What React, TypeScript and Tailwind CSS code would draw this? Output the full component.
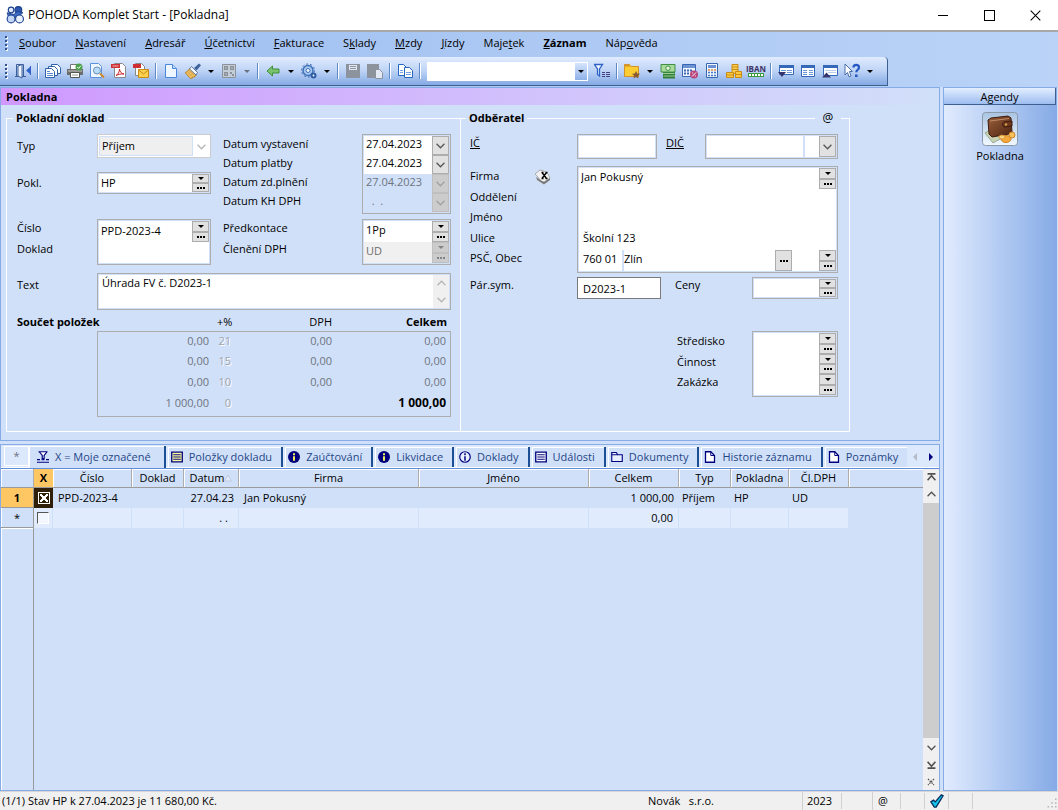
import { useState } from "react";
import type { ReactNode } from "react";
import clsx from "clsx";

const Svg = ({ children, className = "w-4 h-4" }: { children: ReactNode; className?: string }) => (
  <svg viewBox="0 0 16 16" className={clsx("shrink-0", className)} aria-hidden="true">
    {children}
  </svg>
);

const icons: Record<string, ReactNode> = {
  exit: (
    <Svg>
      <path d="M1.500 13.500V1.500h7v12M0 13.500h11" fill="none" stroke="#3b5f9c" />
      <path d="M3 3l4-1.500V15l-4-2z" fill="#eef5ff" stroke="#3b5f9c" />
      <path d="M15 4v7l-4-3.500z" fill="#2f62c8" />
      <path d="M15.500 3v9" stroke="#2f62c8" />
    </Svg>
  ),
  records: (
    <Svg>
      <path d="M6.500 1.500h6l3 3v6h-9z" fill="#fff" stroke="#2f62a8" />
      <path d="M3.500 3.500h6l3 3v6h-9z" fill="#fff" stroke="#2f62a8" />
      <path d="M.5 5.500h6l3 3v6h-9z" fill="#fff" stroke="#2f62a8" />
      <path d="M2 8.500h3M2 10.500h6M2 12.500h6" stroke="#5a8ad0" />
    </Svg>
  ),
  print: (
    <Svg>
      <path d="M3.500 6V1.500h8V6" fill="#fff" stroke="#777" />
      <path d="M0 6h16v6H0z" fill="#6d6d6d" />
      <path d="M1 7h14v2H1z" fill="#9a9a9a" />
      <path d="M3.500 9.500h9v5h-9z" fill="#fff" stroke="#555" />
      <path d="M5 12h6" stroke="#999" />
      <circle cx="12" cy="4" r="3.500" fill="#4ba24b" />
      <path d="M10.300 4l1.300 1.400 2.200-2.600" fill="none" stroke="#fff" />
    </Svg>
  ),
  preview: (
    <Svg>
      <path d="M1.500.5h8l3 3v11h-11z" fill="#eef6ff" stroke="#5b92dc" />
      <circle cx="8" cy="7.500" r="3.500" fill="#b9dcfa" stroke="#6d8fb5" />
      <path d="M11 10.500l4 4" stroke="#d08a28" strokeWidth="2" />
    </Svg>
  ),
  pdf: (
    <Svg>
      <path d="M3.500.5h8l3 3v11h-11z" fill="#fff" stroke="#888" />
      <path d="M0 1h9v4H0z" fill="#cf2f33" />
      <path d="M1.500 3h6" stroke="#f3b9ba" />
      <path d="M5 12.500c2-1 3.500-3.500 3.500-6.500.3 3 2 4.700 4.500 5-3-.3-6 .5-8 1.500z" fill="none" stroke="#c9252a" />
    </Svg>
  ),
  mail: (
    <Svg>
      <path d="M2.500.5h6l3 3v9h-9z" fill="#fff" stroke="#888" />
      <path d="M0 1h8v4H0z" fill="#cf2f33" />
      <path d="M5.500 6.500h10v8h-10z" fill="#fbd04e" stroke="#c98a16" />
      <path d="M5.500 7l5 4 5-4" fill="none" stroke="#c98a16" />
    </Svg>
  ),
  blank: (
    <Svg>
      <path d="M2.500 1.500h7l4 4v9h-11z" fill="#eef6ff" stroke="#4a86dd" />
      <path d="M9.500 1.500v4h4" fill="#bcd7f8" stroke="#4a86dd" />
    </Svg>
  ),
  brush: (
    <Svg>
      <path d="M4.500 5.500l7 6.500c-2 2-4 3-6 3.500L0 9.500c2-.5 3.500-2 4.500-4z" fill="#f0c065" stroke="#b98227" />
      <path d="M2.500 9l5.500 5M4 7.500l5.500 5" stroke="#c58f35" strokeWidth=".7" />
      <path d="M6.500 3.500l6 6-1.500 2.500-6.500-6z" fill="#f3f6fb" stroke="#3c5f93" strokeWidth=".8" />
      <path d="M9 5l5-4.500 2 1.800L11.500 7.500z" fill="#3f639b" />
    </Svg>
  ),
  qr: (
    <Svg>
      <path d="M1.500 1.500h13v13h-13z" fill="#c3ccd9" stroke="#8d9299" />
      <path d="M3 3h4v4H3zM9 3h4v4H9zM3 9h4v4H3zM9 9h2v2H9zM11 11h2v2h-2z" fill="#8d9299" />
      <path d="M4.500 4.500h1v1h-1zM10.500 4.500h1v1h-1zM4.500 10.500h1v1h-1z" fill="#e7edf6" />
    </Svg>
  ),
  back: (
    <Svg>
      <path d="M2 8l5.500-5v3H14v4H7.500v3z" fill="#7cc26c" stroke="#3c8f3c" />
    </Svg>
  ),
  gear: (
    <Svg>
      <circle cx="7" cy="7.500" r="5" fill="#a9c9f2" stroke="#3f70b5" strokeWidth="1.500" />
      <circle cx="7" cy="7.500" r="6.500" fill="none" stroke="#3f70b5" strokeDasharray="2 2" />
      <circle cx="7" cy="7.500" r="2" fill="#eff6ff" stroke="#3f70b5" />
      <circle cx="12.500" cy="12.500" r="3" fill="#2e5da6" />
      <circle cx="12.500" cy="12.500" r=".9" fill="#fff" />
    </Svg>
  ),
  save: (
    <Svg>
      <path d="M1 1h14v14H1z" fill="#8d939c" />
      <path d="M4 2h8v5H4z" fill="#e3eaf5" />
      <path d="M5 3.500h6M5 5.500h6" stroke="#8d939c" />
    </Svg>
  ),
  pasteNew: (
    <Svg>
      <path d="M0 1h12v14H0z" fill="#8d939c" />
      <path d="M8.500 6.500h4l3 3v6h-7z" fill="#e3eaf5" stroke="#8d939c" />
    </Svg>
  ),
  copy: (
    <Svg>
      <path d="M1.500 1.500h5l3 3v8h-8z" fill="#fff" stroke="#2566c0" />
      <path d="M7.500 4.500h5l3 3v7h-8z" fill="#fff" stroke="#2566c0" />
      <path d="M9 9.500h5M9 11.500h5" stroke="#76a3e4" />
      <path d="M3 7.500h3M3 9.500h3" stroke="#76a3e4" />
    </Svg>
  ),
  filter: (
    <Svg>
      <path d="M.5 1.500h8L5.500 6v7l-2-1.500V6z" fill="#f4f9ff" stroke="#2e62c4" strokeWidth="1.300" />
      <path d="M8 9.500h3M12 9.500h4M8 11.500h3M12 11.500h4M8 13.500h3M12 13.500h4" stroke="#41417f" />
    </Svg>
  ),
  folder: (
    <Svg>
      <path d="M.5 13.500v-12h5l1.500 2h7.500v10z" fill="#fccd33" stroke="#d2912a" />
      <path d="M1 2h4l1 1.500H1z" fill="#d2912a" />
      <path d="M12 8l1.200 2.500 2.800.3-2 1.900.5 2.800-2.500-1.400L9.500 15.500l.5-2.800-2-1.900 2.800-.3z" fill="#8a5a35" />
    </Svg>
  ),
  money: (
    <Svg>
      <path d="M3 9h12v6.500H3z" fill="#2f7d38" />
      <path d="M2.500 10.500h12M3.500 13h12" stroke="#b9dfae" strokeWidth=".8" />
      <path d="M1 1.500h14v7.500H1z" fill="#a9d99b" stroke="#3d8f45" />
      <circle cx="8" cy="5.200" r="2.200" fill="#e6f6e0" stroke="#3d8f45" />
    </Svg>
  ),
  calcPercent: (
    <Svg>
      <path d="M.5 1.500h13v12H.5z" fill="#f1f7ff" stroke="#3a65b0" />
      <path d="M1 2h12v3H1z" fill="#6c94d4" />
      <path d="M2 7.500h2M5 7.500h2M8 7.500h2M2 10.500h2M5 10.500h2" stroke="#3a65b0" strokeWidth="2" />
      <circle cx="12" cy="11.500" r="4" fill="#b8447c" />
      <path d="M10 13.500l4-4M10.200 10h1M12.800 13h1" stroke="#fff" />
    </Svg>
  ),
  calc: (
    <Svg>
      <path d="M2.500.5h11v14h-11z" fill="#eef5ff" stroke="#3a65b0" />
      <path d="M4 2h8v3H4z" fill="#6c94d4" />
      <path d="M4 9.500h2M7 9.500h2M10 9.500h2M4 12.500h2M7 12.500h2M10 12.500h2" stroke="#4978c4" strokeWidth="1.500" />
      <path d="M4 7h2M7 7h2M10 7h2" stroke="#e08b3c" strokeWidth="1.500" />
    </Svg>
  ),
  coins: (
    <Svg>
      <path d="M6 1.500h6v9H6z" fill="#fbd04e" stroke="#c98a16" />
      <path d="M6 4h6M6 6.500h6" stroke="#c98a16" />
      <path d="M.5 9.500h7v5h-7zM9.500 8.500h6v6h-6z" fill="#fbc93c" stroke="#c98a16" />
      <path d="M.5 12h7M9.500 11.500h6" stroke="#c98a16" />
    </Svg>
  ),
  winDown: (
    <Svg>
      <path d="M1.500 2.500h14v9h-14z" fill="#fff" stroke="#3568b8" />
      <path d="M1 2h15v3H1z" fill="#3568b8" />
      <path d="M3 7.500h5M9 7.500h5M9 9.500h5" stroke="#6b98dc" />
      <path d="M0 9h8l-4 5z" fill="#35356d" />
    </Svg>
  ),
  winFull: (
    <Svg>
      <path d="M1.500 2.500h13v11h-13z" fill="#fff" stroke="#3568b8" />
      <path d="M1 2h14v3H1z" fill="#3568b8" />
      <path d="M3 7.500h4M9 7.500h4M3 9.500h4M9 9.500h4M3 11.500h4M9 11.500h4" stroke="#6b98dc" />
    </Svg>
  ),
  winUp: (
    <Svg>
      <path d="M1.500 2.500h14v10h-14z" fill="#fff" stroke="#3568b8" />
      <path d="M1 2h15v3H1z" fill="#3568b8" />
      <path d="M3 7.500h11M6 9.500h8" stroke="#b7cdec" />
      <path d="M0 14.500h9L4.500 9.500z" fill="#35356d" />
    </Svg>
  ),
  help: (
    <Svg>
      <path d="M1 1l7.500 7.500H5.500L7 13l-2 .8-1.500-4.300L1 12z" fill="#fff" stroke="#4a6ea8" />
      <path d="M9.500 4.500c0-3.500 5.500-3.500 5.500 0 0 2.300-2.700 2.300-2.700 4.700" fill="none" stroke="#2458c4" strokeWidth="2.200" />
      <path d="M11 11.500h2.600V14H11z" fill="#2458c4" />
    </Svg>
  ),
};

const navy = "#00007f";
const tabIcons: Record<string, ReactNode> = {
  funnel: (
    <Svg className="w-3 h-3">
      <path d="M2 1h12M3 1l4 5v4h2.500V6l4-5" fill="#fff" stroke={navy} strokeWidth="1.600" />
      <path d="M0 11.500h4M6 11.500h4M12 11.500h4M0 15h16" stroke={navy} strokeWidth="1.600" />
    </Svg>
  ),
  listYellow: (
    <Svg className="w-3 h-3">
      <path d="M1 1.500h14v13H1z" fill="#ffff9c" stroke={navy} strokeWidth="1.800" />
      <path d="M3 5h10M3 8h10M3 11h10" stroke={navy} strokeWidth="1.300" />
    </Svg>
  ),
  info: (
    <Svg className="w-3 h-3">
      <circle cx="8" cy="8" r="8" fill={navy} />
      <path d="M8 3v2.500M8 7v6" stroke="#ffff5c" strokeWidth="2.500" />
    </Svg>
  ),
  infoOutline: (
    <Svg className="w-3 h-3">
      <circle cx="8" cy="8" r="7" fill="#e8f0ff" stroke={navy} strokeWidth="1.600" />
      <path d="M8 3v2.500M8 7v6" stroke={navy} strokeWidth="2" />
    </Svg>
  ),
  list: (
    <Svg className="w-3 h-3">
      <path d="M1 1.500h14v13H1z" fill="#fff" stroke={navy} strokeWidth="1.800" />
      <path d="M3 5h10M3 8h10M3 11h10" stroke={navy} strokeWidth="1.300" />
    </Svg>
  ),
  dir: (
    <Svg className="w-3 h-3">
      <path d="M1 14V2h6l2 3h6v9z" fill="#e8f0ff" stroke={navy} strokeWidth="1.500" />
      <path d="M1 5h8" stroke={navy} strokeWidth="1.300" />
    </Svg>
  ),
  page: (
    <Svg className="w-3 h-3">
      <path d="M2 1h7l5 5v9H2z" fill="#fff" stroke={navy} strokeWidth="1.700" />
      <path d="M9 1v5h5" fill="none" stroke={navy} strokeWidth="1.300" />
    </Svg>
  ),
};

// "_" is placed before the underlined access key
const menu = [
  "_Soubor", "_Nastavení", "_Adresář", "_Účetnictví", "_Fakturace", "S_klady",
  "_Mzdy", "_Jízdy", "Maje_tek", "_Záznam", "Náp_ověda",
];

const tabs = [
  { label: "X = Moje označené", icon: "funnel" },
  { label: "Položky dokladu", icon: "listYellow" },
  { label: "Zaúčtování", icon: "info" },
  { label: "Likvidace", icon: "info" },
  { label: "Doklady", icon: "infoOutline" },
  { label: "Události", icon: "list" },
  { label: "Dokumenty", icon: "dir" },
  { label: "Historie záznamu", icon: "page" },
  { label: "Poznámky", icon: "page" },
];

const totals = [
  { base: "0,00", rate: "21", vat: "0,00", sum: "0,00" },
  { base: "0,00", rate: "15", vat: "0,00", sum: "0,00" },
  { base: "0,00", rate: "10", vat: "0,00", sum: "0,00" },
  { base: "1 000,00", rate: "0", vat: "", sum: "1 000,00" },
];

const Tool = ({ name, label }: { name: string; label: string }) => (
  <button aria-label={label} className="w-[22px] h-6 flex items-center justify-center">
    {icons[name]}
  </button>
);

const Caret = ({ off = false }: { off?: boolean }) => (
  <button aria-label="Více" className="w-[14px] h-6 flex items-center justify-center">
    <span className={clsx("border-x-3 border-t-3 border-x-transparent", off ? "border-t-gray-500" : "border-t-black")} />
  </button>
);

const Sep = () => (
  <span className="w-2 h-4 flex justify-center">
    <span className="w-0.5 border-l border-[#5f88c8] bg-white" />
  </span>
);

const Grip = () => (
  <span className="w-3 pl-[5px] flex flex-col gap-0.5">
    {[0, 1, 2, 3].map((i) => (
      <span key={i} className="size-0.5 bg-[#31528c] shadow-[1px_1px_0_#fff]" />
    ))}
  </span>
);

const Dots = () => (
  <span className="flex gap-px">
    <span className="size-0.5 bg-current" />
    <span className="size-0.5 bg-current" />
    <span className="size-0.5 bg-current" />
  </span>
);

// Stacked "drop down" and "..." buttons at the right edge of a field
const Pick = ({ off = false }: { off?: boolean }) => {
  const cls = clsx(
    "flex-1 w-[17px] flex items-center justify-center border",
    off ? "border-[#bfbfbf] bg-[#cccccc] text-[#838383]" : "border-[#adadad] bg-[#e1e1e1] text-black"
  );
  return (
    <span className="shrink-0 max-h-[21px] h-full flex flex-col">
      <button className={cls} disabled={off} aria-label="Rozbalit">
        <span className="border-x-3 border-t-3 border-x-transparent border-t-current" />
      </button>
      <button className={cls} disabled={off} aria-label="Vybrat">
        <Dots />
      </button>
    </span>
  );
};

const Chevron = ({ up = false, className = "w-[9px] h-[9px]" }: { up?: boolean; className?: string }) => (
  <Svg className={className}>
    <path d={up ? "M1 11l7-7 7 7" : "M1 5l7 7 7-7"} fill="none" stroke="currentColor" strokeWidth="2.200" />
  </Svg>
);

const DropButton = ({ off = false }: { off?: boolean }) => (
  <button
    aria-label="Kalendář"
    disabled={off}
    className={clsx(
      "w-[17px] shrink-0 flex items-center justify-center border",
      off ? "border-[#bfbfbf] bg-[#cccccc] text-[#a0a0a0]" : "border-[#adadad] bg-[#e1e1e1] text-[#555]"
    )}
  >
    <Chevron />
  </button>
);

const box = "border border-[#adadad] bg-[#d1e0f9] p-px flex";
const input = "min-w-0 flex-1 bg-white px-0.5 outline-none";

function CashForm() {
  const [text, setText] = useState("Úhrada FV č. D2023-1");

  return (
    <fieldset className="w-[455px] shrink-0 border border-white pl-[10px] pr-[9px] pb-[14px]">
      <legend className="px-[3px] -ml-1 font-bold">Pokladní doklad</legend>
      <div className="flex justify-between pt-[7px]">
        <div className="w-[194px]">
          <div className="flex h-6 items-center">
            <label htmlFor="typ" className="w-20">Typ</label>
            <div className="relative flex-1 h-6 border border-[#ccc] bg-white p-px">
              <select id="typ" disabled defaultValue="Příjem" className="w-[94px] h-full appearance-none border border-[#d1e0f9] bg-[#efefef] px-0.5 opacity-100 text-black">
                <option>Příjem</option>
              </select>
              <Chevron className="absolute right-1 top-[7px] w-[9px] h-[9px] text-[#b5b5b5]" />
            </div>
          </div>
          <div className="flex h-[22px] items-center mt-[14px]">
            <label htmlFor="pokl" className="w-20">Pokl.</label>
            <div className={clsx(box, "w-[114px] h-[22px]")}>
              <input id="pokl" className={input} defaultValue="HP" />
              <Pick />
            </div>
          </div>
          <div className="flex mt-[25px]">
            <div className="w-20 leading-[18px]">
              <label htmlFor="cislo" className="block h-[21px]">Číslo</label>
              <label htmlFor="doklad" className="block h-[21px]">Doklad</label>
            </div>
            <div className={clsx(box, "w-[114px] h-[46px]")}>
              <div className="flex-1 min-w-0 bg-white flex flex-col">
                <input id="cislo" className={clsx(input, "pb-1")} defaultValue="PPD-2023-4" />
                <input id="doklad" className={input} />
              </div>
              <div className="bg-white">
                <div className="h-[21px]"><Pick /></div>
              </div>
            </div>
          </div>
        </div>

        <div className="w-[228px] flex flex-col gap-[5px]">
          <div className="flex justify-between">
            <div className="leading-[19px]">
              <label htmlFor="d1" className="block">Datum vystavení</label>
              <label htmlFor="d2" className="block">Datum platby</label>
              <label htmlFor="d3" className="block">Datum zd.plnění</label>
              <label htmlFor="d4" className="block">Datum KH DPH</label>
            </div>
            <div className={clsx(box, "w-[89px] flex-col")}>
              {["27.04.2023", "27.04.2023", "27.04.2023", "  .  ."].map((d, i) => (
                <div key={i} className="flex h-[19px]">
                  <input
                    id={`d${i + 1}`}
                    disabled={i > 1}
                    defaultValue={d}
                    className={clsx("min-w-0 flex-1 px-0.5 pb-1", i > 1 ? "text-[#6d7580]" : "bg-white")}
                  />
                  <DropButton off={i > 1} />
                </div>
              ))}
            </div>
          </div>
          <div className="flex justify-between">
            <div className="leading-[18px]">
              <label htmlFor="predkontace" className="block h-[21px]">Předkontace</label>
              <label htmlFor="cleneni" className="block h-[21px]">Členění DPH</label>
            </div>
            <div className={clsx(box, "w-[89px] flex-col")}>
              <div className="flex h-[21px]">
                <input id="predkontace" className={clsx(input, "pb-1")} defaultValue="1Pp" />
                <Pick />
              </div>
              <div className="flex h-[21px]">
                <input id="cleneni" disabled className="min-w-0 flex-1 px-0.5 pb-1 bg-[#f0f0f0] text-[#6d6d6d]" defaultValue="UD" />
                <Pick off />
              </div>
            </div>
          </div>
        </div>
      </div>

      <div className="flex mt-2">
        <label htmlFor="text" className="w-20 pt-[3px]">Text</label>
        <div className={clsx(box, "flex-1 h-[37px]")}>
          <textarea
            id="text"
            value={text}
            onChange={(e) => setText(e.target.value)}
            className="flex-1 bg-white px-[3px] leading-4 resize-none overflow-hidden outline-none"
          />
          <div className="w-4 bg-[#f0f0f0] flex flex-col items-center justify-around text-[#b5b5b5]">
            <button aria-label="Nahoru"><Chevron up /></button>
            <button aria-label="Dolů"><Chevron /></button>
          </div>
        </div>
      </div>

      <table className="w-full table-fixed border-separate border-spacing-0 mt-[3px]">
        <colgroup>
          <col className="w-20" />
          <col className="w-[114px]" />
          <col className="w-8" />
          <col className="w-[89px]" />
          <col />
        </colgroup>
        <thead>
          <tr className="leading-[18px]">
            <th colSpan={2} className="text-left">Součet položek</th>
            <th className="font-normal pl-1.5 text-left">+%</th>
            <th className="font-normal text-right">DPH</th>
            <th className="text-right pr-1">Celkem</th>
          </tr>
        </thead>
        <tbody className="text-right text-[#6d7580]">
          {totals.map((row, i) => {
            const last = i === totals.length - 1;
            const edge = clsx("border-[#adadad]", i === 0 && "border-t", last && "border-b");
            return (
              <tr key={i} className={clsx("align-top", last ? "h-[23px]" : "h-[21px]")}>
                <td />
                <td className={clsx(edge, "border-l pr-0.5")}>{row.base}</td>
                <td className={clsx(edge, "text-[#a0a4ab] pr-3 [text-shadow:1px_1px_0_#fff]")}>{row.rate}</td>
                <td className={edge}>{row.vat}</td>
                <td className={clsx(edge, "border-r pr-1", last && "font-bold text-[12px] text-black")}>{row.sum}</td>
              </tr>
            );
          })}
        </tbody>
      </table>
    </fieldset>
  );
}

function CustomerForm() {
  return (
    <fieldset className="relative w-[389px] min-w-0 border border-l-0 border-white pl-[9px] pr-[11px]">
      <legend className="px-[3px] -ml-1 font-bold">Odběratel</legend>
      <button aria-label="E-mail" className="absolute right-2 -top-[18px] w-[26px] bg-[#d1e0f9] text-[12px]">@</button>
      <div className="flex pt-[7px]">
        <label htmlFor="ic" className="w-[107px] underline">IČ</label>
        <div className={clsx(box, "w-20 h-[25px]")}>
          <input id="ic" className={input} />
        </div>
        <label htmlFor="dic" className="ml-[9px] underline">DIČ</label>
        <div className={clsx(box, "ml-auto w-[133px] h-[25px] gap-0.5")}>
          <input id="dic" className="w-24 bg-white outline-none" />
          <div className="flex-1 flex justify-end bg-white">
            <DropButton />
          </div>
        </div>
      </div>

      <div className="flex mt-[7px]">
        <div className="w-[107px] grid grid-rows-[21px_20px_21px_20px_21px] leading-5">
          <div className="flex justify-between pr-[26px]">
            <label htmlFor="firma">Firma</label>
            <button aria-label="Adresář">
              <Svg>
                <path d="M1 8l7 4 7-4v3l-6 4.500L2 11z" fill="#858585" />
                <path d="M0 5l5-4 4 1 4 3 2 4-6 4-3-1-4-5z" fill="#f1f1f1" stroke="#9a9a9a" strokeWidth=".8" />
                <path d="M4 11l5 3 6-4" fill="none" stroke="#6e6e6e" />
                <path d="M7 3.500l4.500 6M11.500 3.500l-4.500 6M6.500 3.500h2M10.500 3.500h2M6.500 9.500h2M10.500 9.500h2" stroke="#000" strokeWidth="1.400" />
              </Svg>
            </button>
          </div>
          <label htmlFor="oddeleni">Oddělení</label>
          <label htmlFor="jmeno">Jméno</label>
          <label htmlFor="ulice">Ulice</label>
          <label htmlFor="psc">PSČ, Obec</label>
        </div>
        <div className={clsx(box, "flex-1")}>
          <div className="flex-1 grid grid-cols-1 grid-rows-[21px_20px_21px_20px_21px] bg-white">
            <div className="flex">
              <input id="firma" className={clsx(input, "pb-1")} defaultValue="Jan Pokusný" />
              <Pick />
            </div>
            <input id="oddeleni" className={input} />
            <input id="jmeno" className={input} />
            <input id="ulice" className="min-w-0 px-1 pb-1 outline-none" defaultValue="Školní 123" />
            <div className="flex">
              <input id="psc" className="w-[43px] pl-1 pb-1 outline-none" defaultValue="760 01" />
              <span className="w-0.5 bg-[#d1e0f9]" />
              <input aria-label="Obec" className="min-w-0 flex-1 pb-1 outline-none" defaultValue="Zlín" />
              <button aria-label="Vybrat obec" className="w-[17px] mr-[27px] flex items-center justify-center border border-[#adadad] bg-[#e1e1e1]">
                <Dots />
              </button>
              <Pick />
            </div>
          </div>
        </div>
      </div>

      <div className="flex mt-1">
        <label htmlFor="parsym" className="w-[107px] leading-4">Pár.sym.</label>
        <input id="parsym" className="w-[84px] h-[22px] border border-[#7a7a7a] bg-white px-[5px] outline-none" defaultValue="D2023-1" />
        <label htmlFor="ceny" className="ml-[14px] leading-4">Ceny</label>
        <div className={clsx(box, "ml-auto w-[86px] h-[22px]")}>
          <input id="ceny" className={input} />
          <Pick />
        </div>
      </div>

      <div className="flex mt-8 justify-end">
        <div className="w-[75px] grid grid-rows-[21px_20px_21px] leading-5">
          <label htmlFor="stredisko">Středisko</label>
          <label htmlFor="cinnost">Činnost</label>
          <label htmlFor="zakazka">Zakázka</label>
        </div>
        <div className={clsx(box, "w-[86px]")}>
          <div className="flex-1 min-w-0 grid grid-cols-1 grid-rows-[21px_20px_21px]">
            {["stredisko", "cinnost", "zakazka"].map((id) => (
              <div key={id} className="flex">
                <input id={id} className={input} />
                <Pick />
              </div>
            ))}
          </div>
        </div>
      </div>
    </fieldset>
  );
}

function RecordTable() {
  const head = "font-normal border-r border-r-[#adadad] border-b border-b-[#9a9a9a] shadow-[inset_1px_1px_0_#fff]";
  const fresh = "bg-[#e1ebfe] border-r border-[#d1e0f9]";
  return (
    <div className="flex-1 flex flex-col min-w-0">
      <table className="w-full table-fixed border-separate border-spacing-0">
        <colgroup>
          <col className="w-[33px]" />
          <col className="w-[19px]" />
          <col className="w-[79px]" />
          <col className="w-[52px]" />
          <col className="w-[55px]" />
          <col className="w-[180px]" />
          <col className="w-[170px]" />
          <col className="w-[90px]" />
          <col className="w-[52px]" />
          <col className="w-[58px]" />
          <col className="w-[60px]" />
          <col />
        </colgroup>
        <thead>
          <tr className="h-[19px] leading-[18px]">
            <th className={head} />
            <th className="bg-[#ffc763] border-b border-b-[#9a9a9a]">X</th>
            <th className={head}>Číslo</th>
            <th className={head}>Doklad</th>
            <th className={head}>
              <span className="inline-flex items-center">
                Datum
                <Svg className="w-2 h-2">
                  <path d="M1 14l7-12 7 12z" fill="#e1ebfe" stroke="#b8c2d2" strokeWidth="1.500" />
                </Svg>
              </span>
            </th>
            {["Firma", "Jméno", "Celkem", "Typ", "Pokladna", "Čl.DPH"].map((h) => (
              <th key={h} className={head}>{h}</th>
            ))}
            <th className="border-b border-b-[#9a9a9a] shadow-[inset_1px_1px_0_#fff]" />
          </tr>
        </thead>
        <tbody className="leading-4">
          <tr className="h-5">
            <th className="bg-[#ffc763] border-b border-r border-[#9a9a9a]">1</th>
            <td className="bg-[#30200a]">
              <input
                type="checkbox"
                defaultChecked
                aria-label="Označit záznam 1"
                className="appearance-none block mx-auto size-3 border border-white bg-[#30200a] bg-origin-content bg-no-repeat p-px bg-[linear-gradient(45deg,transparent_40%,#fff_40%,#fff_60%,transparent_60%),linear-gradient(-45deg,transparent_40%,#fff_40%,#fff_60%,transparent_60%)]"
              />
            </td>
            <td className="pl-[5px]">PPD-2023-4</td>
            <td />
            <td className="text-right pr-[5px]">27.04.23</td>
            <td className="pl-[5px]">Jan Pokusný</td>
            <td />
            <td className="text-right pr-[5px]">1 000,00</td>
            <td className="pl-[3px]">Příjem</td>
            <td className="pl-[3px]">HP</td>
            <td className="pl-[3px]">UD</td>
            <td />
          </tr>
          <tr className="h-5">
            <td className="text-center border-b border-r border-[#9a9a9a] shadow-[inset_1px_0_0_#fff]">*</td>
            <td className={fresh}>
              <input
                type="checkbox"
                aria-label="Nový záznam"
                className="appearance-none block mx-auto size-3 bg-[#f1f6ff] border border-t-[#555] border-l-[#555] border-white"
              />
            </td>
            <td className={fresh} />
            <td className={fresh} />
            <td className={clsx(fresh, "text-right pr-2.5")}>. .</td>
            <td className={fresh} />
            <td className={fresh} />
            <td className={clsx(fresh, "text-right pr-[5px]")}>0,00</td>
            <td className={fresh} />
            <td className={fresh} />
            <td className={fresh} />
            <td />
          </tr>
        </tbody>
      </table>
      <div className="flex-1 w-[33px] border-r border-[#9a9a9a] shadow-[inset_1px_1px_0_#fff]" />
    </div>
  );
}

function Records() {
  const [active, setActive] = useState(0);
  return (
    <section className="flex-1 flex flex-col border border-[#86abe6]">
      <div role="tablist" className="flex items-end h-6 pl-[3px] border-b border-[#5f8ddb] bg-[#dce8fc] shadow-[inset_0_-1px_0_#fff] text-[#1f4788]">
        <button className="w-[25px] h-[20px] mb-0.5 shrink-0 border border-white text-gray-500">*</button>
        {tabs.map((t, i) => (
          <button
            key={t.label}
            role="tab"
            aria-selected={i === active}
            onClick={() => setActive(i)}
            className={clsx(
              "flex items-center gap-1.5 whitespace-nowrap",
              i === active
                ? "h-[22px] pl-2 pr-[13px] bg-[#d1e0f9] border-r-2 border-[#1c4f96] shadow-[inset_1px_1px_0_#fff]"
                : "h-5 mb-px ml-0.5 pl-[3px] pr-[9px] bg-[#d1e0f9] shadow-[inset_1px_1px_0_#fff]",
              i !== active && i < tabs.length - 1 && "border-r-2 border-[#1c4f96]"
            )}
          >
            {tabIcons[t.icon]}
            {t.label}
          </button>
        ))}
        <div className="ml-auto pr-1.5 self-center flex gap-3">
          <button aria-label="Předchozí" className="border-y-4 border-r-4 border-y-transparent border-r-[#b5bcc8]" />
          <button aria-label="Další" className="border-y-4 border-l-4 border-y-transparent border-l-[#00007f]" />
        </div>
      </div>
      <div className="flex-1 flex">
        <RecordTable />
        <div className="w-4 flex flex-col items-center bg-[#f0f0f0] text-[#505050]">
          <button aria-label="Na začátek" className="h-[17px]">
            <Svg className="w-[9px] h-[9px]">
              <path d="M1 1.500h14M1 13l7-8 7 8" fill="none" stroke="currentColor" strokeWidth="2.800" />
            </Svg>
          </button>
          <button aria-label="Nahoru" className="h-[17px]"><Chevron up /></button>
          <div className="w-full flex-1 bg-[#cdcdcd]" />
          <button aria-label="Dolů" className="h-[18px]"><Chevron /></button>
          <button aria-label="Na konec" className="h-[17px]">
            <Svg className="w-[9px] h-[9px]">
              <path d="M1 14.500h14M1 3l7 8 7-8" fill="none" stroke="currentColor" strokeWidth="2.800" />
            </Svg>
          </button>
          <button aria-label="Zrušit" className="h-[17px]">
            <Svg className="w-2 h-2">
              <path d="M2 2l12 12M14 2L2 14" stroke="currentColor" strokeWidth="2.500" strokeDasharray="3 2" />
            </Svg>
          </button>
        </div>
      </div>
    </section>
  );
}

export default function App() {
  return (
    <div className="min-h-screen flex flex-col bg-[#c9dcf9] font-['Open_Sans','Noto_Sans',sans-serif] text-[11px] leading-[18px] text-black">
      {/* Title bar */}
      <header className="h-8 shrink-0 flex items-center bg-white border-b-2 border-[#a8a8a8] pl-1.5">
        <Svg className="w-[18px] h-[18px]">
          <circle cx="4.500" cy="3.500" r="2.500" fill="#dfe9fb" stroke="#1c3f8f" />
          <circle cx="11" cy="3.500" r="3" fill="#2b57ae" stroke="#1c3f8f" />
          <path d="M1 6l6 1.500L10 5l5 1-4 3-3 1-6-1z" fill="#3e6cc4" stroke="#1c3f8f" strokeWidth=".8" />
          <circle cx="4.500" cy="11.500" r="3.500" fill="#c4d6f6" stroke="#1c3f8f" />
          <circle cx="12" cy="11.500" r="3.500" fill="#e9f0fd" stroke="#1c3f8f" />
        </Svg>
        <h1 className="ml-1 text-[12px]">POHODA Komplet Start - [Pokladna]</h1>
        <div className="ml-auto h-full flex">
          <button aria-label="Minimalizovat" className="w-[46px] flex items-center justify-center"><span className="w-[10px] h-px bg-black" /></button>
          <button aria-label="Maximalizovat" className="w-[46px] flex items-center justify-center"><span className="size-[11px] border border-black" /></button>
          <button aria-label="Zavřít" className="w-[46px] flex items-center justify-center">
            <Svg className="w-[11px] h-[11px]"><path d="M1 1l14 14M15 1L1 15" stroke="#000" strokeWidth="1.500" /></Svg>
          </button>
        </div>
      </header>

      {/* Menu and toolbar */}
      <div className="shrink-0 bg-linear-to-r from-[#9ebef0] to-[#bad3f7]">
        <nav className="h-[25px] pb-1 flex items-center">
          <Grip />
          <div className="flex gap-[19px] ml-[7px]">
            {menu.map((m) => {
              const [a, b] = m.split("_");
              return (
                <button key={m} className={m === "_Záznam" ? "font-bold" : ""}>
                  {a}<u>{b[0]}</u>{b.slice(1)}
                </button>
              );
            })}
          </div>
        </nav>
        <div className="w-[888px] h-[29px] mb-px flex items-center rounded-tr-sm border-b border-r border-[#3f5f91] bg-linear-to-b from-[#e1ecff] via-[#bdd3f5] to-[#84a9e4]">
          <Grip />
          <Tool name="exit" label="Konec" />
          <Sep />
          <Tool name="records" label="Záznamy" />
          <Tool name="print" label="Tisk" />
          <Tool name="preview" label="Náhled" />
          <Tool name="pdf" label="Export do PDF" />
          <Tool name="mail" label="Odeslat" />
          <Sep />
          <Tool name="blank" label="Nový" />
          <Tool name="brush" label="Štětec" />
          <Caret />
          <Tool name="qr" label="QR kód" />
          <Caret off />
          <Sep />
          <Tool name="back" label="Zpět" />
          <Caret />
          <Tool name="gear" label="Nastavení" />
          <Caret />
          <Sep />
          <Tool name="save" label="Uložit" />
          <Tool name="pasteNew" label="Vložit" />
          <Sep />
          <Tool name="copy" label="Kopírovat" />
          <Sep />
          <div className="ml-[3px] mr-[3px] w-[161px] h-[19px] flex bg-white">
            <input aria-label="Hledat" className="min-w-0 flex-1 px-1 outline-none" />
            <button aria-label="Historie hledání" className="w-3 m-px bg-linear-to-b from-[#d6e5fc] to-[#8db1e8] flex items-center justify-center">
              <span className="border-x-3 border-t-3 border-x-transparent border-t-black" />
            </button>
          </div>
          <Tool name="filter" label="Filtr" />
          <Sep />
          <Tool name="folder" label="Oblíbené" />
          <Caret />
          <Tool name="money" label="Hotovost" />
          <Tool name="calcPercent" label="Kalkulačka DPH" />
          <Tool name="calc" label="Kalkulačka" />
          <Tool name="coins" label="Mince" />
          <button className="w-[22px] flex flex-col items-center font-bold text-[8px] leading-2 text-[#3d3268]">
            IBAN
            <span className="w-4 h-1 border border-[#3c9a3c] bg-[repeating-linear-gradient(90deg,#fff_0_2px,#3c9a3c_2px_3px)]" />
          </button>
          <Sep />
          <Tool name="winDown" label="Dolní okno" />
          <Tool name="winFull" label="Celé okno" />
          <Tool name="winUp" label="Horní okno" />
          <Tool name="help" label="Nápověda" />
          <Caret />
        </div>
      </div>

      <main className="flex-1 flex gap-[3px] bg-[#d1e0f9] pr-px">
        <div className="flex-1 min-w-0 flex flex-col gap-[3px]">
          <section className="border border-[#86abe6] bg-[#d1e0f9]">
            <h2 className="h-[17px] leading-[17px] pl-[5px] font-bold bg-linear-to-r from-[#cf98fe] to-[#d1e0f9]">Pokladna</h2>
            <div className="flex pt-1 pl-[5px] pb-2">
              <CashForm />
              <CustomerForm />
            </div>
          </section>
          <Records />
        </div>
        <aside className="w-[114px] border border-[#86abe6] bg-linear-to-r from-[#e1ebfe] to-[#86abe6]">
          <h2 className="h-[17px] leading-[17px] text-center border-b border-r border-[#3f5f91] bg-linear-to-b from-[#e4eeff] to-[#9dbdf0]">Agendy</h2>
          <button className="block mx-auto mt-1.5">
            <svg viewBox="0 0 36 36" className="w-9 h-9 mx-auto" aria-hidden="true">
              <defs>
                <linearGradient id="tile" x1="0" y1="0" x2="0" y2="1">
                  <stop offset="0" stopColor="#a9c4e2" />
                  <stop offset="1" stopColor="#f1f8ff" />
                </linearGradient>
                <linearGradient id="leather" x1="0" y1="0" x2="1" y2="1">
                  <stop offset="0" stopColor="#9a5f3c" />
                  <stop offset="1" stopColor="#4d2310" />
                </linearGradient>
              </defs>
              <rect x=".5" y="1.500" width="35" height="33" rx="3" fill="url(#tile)" stroke="#8c9aa8" />
              <path d="M3 22l8-5 9 10-9 5z" fill="#c7d2b4" stroke="#87947a" strokeWidth=".7" />
              <path d="M6 9l3-2 17-2 3 2 1 14-3 2-17 3-3-3z" fill="url(#leather)" stroke="#3e1c0c" />
              <path d="M8 10l19-2.500" stroke="#c08b66" />
              <path d="M22 11l8-1v5l-7 1c-3 0-3-4-1-5z" fill="#6d371d" stroke="#3e1c0c" />
              <circle cx="24" cy="13.500" r="1.200" fill="#d9a24e" />
              <ellipse cx="24" cy="28" rx="5" ry="3.500" fill="#f5a93b" stroke="#d08425" />
              <ellipse cx="30" cy="24" rx="3" ry="3" fill="#f9c25c" stroke="#d08425" />
              <ellipse cx="20" cy="26" rx="3" ry="2" fill="#fbd27c" stroke="#d08425" strokeWidth=".7" />
            </svg>
            Pokladna
          </button>
        </aside>
      </main>

      {/* Status bar */}
      <footer className="h-[19px] shrink-0 flex items-center bg-[#f0f0f0] border-t border-[#d5d5d5] pl-0.5">
        <span>(1/1) Stav HP k 27.04.2023 je 11 680,00 Kč.</span>
        <span className="ml-auto w-[154px] whitespace-pre">Novák   s.r.o.</span>
        <span className="w-[39px] border-l border-[#d0d0d0] pl-1">2023</span>
        <span className="w-[31px] h-4 border-l border-[#d0d0d0]" />
        <span className="w-[28px] border-l border-[#d0d0d0] pl-[5px]">@</span>
        <span className="w-6 h-4 border-l border-[#d0d0d0]" />
        <span className="w-6 h-4 border-l border-[#d0d0d0] flex items-center justify-center">
          <Svg className="w-[14px] h-[14px]">
            <path d="M1 9l3-2 2 2 7-8 2 1-8 13H5z" fill="#12c4e8" stroke="#062a5c" strokeWidth="1.500" />
          </Svg>
        </span>
        <span className="w-6 h-4 border-l border-[#d0d0d0]" />
        <span className="w-[86px] h-4 border-l border-[#d0d0d0] flex justify-end items-end">
          <Svg className="w-3 h-3">
            <path d="M12 2h2v2h-2zM12 7h2v2h-2zM7 7h2v2H7zM12 12h2v2h-2zM7 12h2v2H7zM2 12h2v2H2z" fill="#b5b5b5" />
          </Svg>
        </span>
      </footer>
    </div>
  );
}
